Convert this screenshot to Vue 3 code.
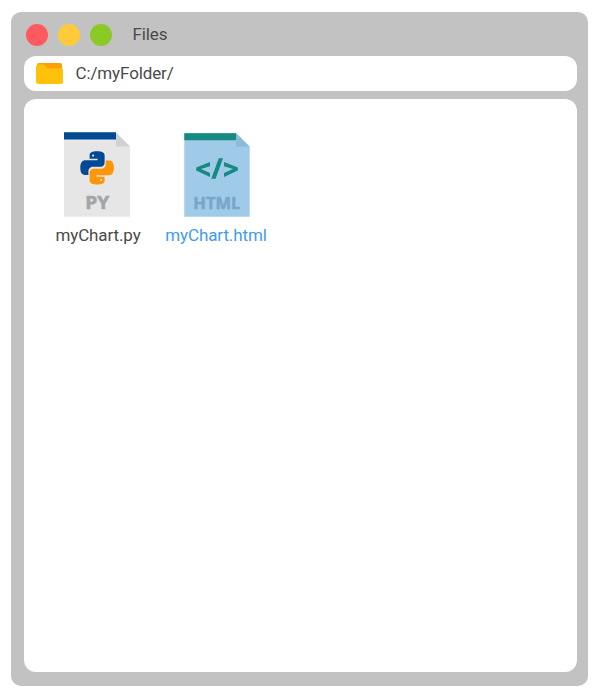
<script setup>
const path = 'C:/myFolder/'
const files = [
  { name: 'myChart.py', kind: 'py' },
  { name: 'myChart.html', kind: 'html' },
]
const snake =
  'M17 0.4C12 0.4 9.5 1.8 9.5 4.4V8H17.5V9.5H5.5C2 9.5 0.2 12 0.2 17C0.2 22 2 24.2 5 24.2H8.3V20.5C8.3 18 10.5 16 13 16H20.5C23 16 24.5 14.3 24.5 12V4.4C24.5 1.8 21.5 0.4 17 0.4ZM13 3.7a1.1 1.1 0 1 1 0 2.2a1.1 1.1 0 0 1 0-2.2Z'
</script>

<template>
  <main class="desktop">
    <section class="window">
      <header class="titlebar">
        <span class="dot red"></span>
        <span class="dot yellow"></span>
        <span class="dot green"></span>
        <span class="title">Files</span>
      </header>
      <div class="address">
        <svg class="folder" width="27" height="21" viewBox="0 0 27 21">
          <path d="M3 0H24Q26 0 26 2V10H1V2Q1 0 3 0Z" fill="#ff9f06" />
          <path d="M2.5 1.5H7.5Q8.8 1.5 9.6 3L10.4 4.3Q11 5.2 12 5.2H25Q27 5.2 27 7V19Q27 21 25 21H2.5Q0 21 0 19V4Q0 1.5 2.5 1.5Z" fill="#ffc10a" />
        </svg>
        <span class="path">{{ path }}</span>
      </div>
      <div class="content">
        <div v-for="f in files" :key="f.name" class="file" :class="f.kind">
          <svg v-if="f.kind === 'py'" width="66" height="85" viewBox="0 0 66 85">
            <path d="M0 0.5H52L66 14.5V84.7H0Z" fill="#e6e6e6" />
            <path d="M52 0.5L66 14.5H52Z" fill="#d0d1d3" />
            <path d="M0 0.3H52V7.4H0Z" fill="#024a94" />
            <g transform="translate(16.1 18.8)" fill-rule="evenodd">
              <path :d="snake" fill="#024a94" />
              <path :d="snake" fill="#ff9608" transform="rotate(180 17 17)" />
            </g>
            <text class="type" x="33.2" y="76.8" font-size="18.5" textLength="24" lengthAdjust="spacingAndGlyphs" fill="#a2a6a9" stroke="#a2a6a9">PY</text>
          </svg>
          <svg v-else width="66" height="85" viewBox="0 0 66 85">
            <path d="M0.3 1H52L65.7 14.8V84.7H0.3Z" fill="#9fcbe9" />
            <path d="M52 1L65.7 14.8H52Z" fill="#8cbbd9" />
            <path d="M0.3 1.2H52V8.2H0.3Z" fill="#158a80" />
            <path d="M26 30.1V34.2L17 37L26 40.9V45L12.2 38.5V35.4ZM40 30.1V34.2L49 37L40 40.9V45L53.8 38.5V35.4ZM34.7 26.2H39L31.6 46.8H27.3Z" fill="#158a80" />
            <text class="type" x="32.8" y="76.8" font-size="16.5" textLength="47" lengthAdjust="spacingAndGlyphs" fill="#78a7c8" stroke="#78a7c8">HTML</text>
          </svg>
          <span class="name">{{ f.name }}</span>
        </div>
      </div>
    </section>
  </main>
</template>

<style>
body {
  background: #fff;
}
</style>

<style scoped>
.desktop {
  box-sizing: border-box;
  width: 600px;
  height: 700px;
  padding: 12px 12px 14px 11px;
  font-family: Roboto, sans-serif;
  font-size: 17px;
  letter-spacing: -0.12px;
  color: #4a4a4a;
}
.window {
  box-sizing: border-box;
  display: flex;
  flex-direction: column;
  height: 674px;
  padding: 0 11px 14px 13px;
  border-radius: 10px;
  background: #c2c2c2;
}
.titlebar {
  display: flex;
  align-items: center;
  gap: 10px;
  height: 44px;
  padding: 1px 2px 0;
  box-sizing: border-box;
}
.dot {
  width: 22px;
  height: 22px;
  border-radius: 50%;
}
.red { background: #ff5a5f; }
.yellow { background: #ffcb3c; }
.green { background: #8bc926; }
.title {
  margin: 0 0 2px 10.5px;
  line-height: 20px;
}
.address {
  box-sizing: border-box;
  display: flex;
  align-items: center;
  gap: 12.5px;
  height: 35px;
  padding-left: 12px;
  border-radius: 12px;
  background: #fff;
}
.path {
  margin-bottom: 1px;
  line-height: 20px;
}
.content {
  box-sizing: border-box;
  display: flex;
  align-items: flex-start;
  flex: 1;
  gap: 10px;
  margin-top: 8px;
  padding: 33px 18px;
  border-radius: 12px;
  background: #fff;
}
.file {
  display: flex;
  flex-direction: column;
  align-items: center;
  width: 110px;
}
.name {
  margin-top: 8px;
  margin-left: 2px;
  line-height: 20px;
  white-space: nowrap;
}
.html .name {
  margin-left: 0;
  margin-right: 2px;
  color: #3f9bee;
}
.type {
  font-family: "Open Sans", sans-serif;
  font-weight: 700;
  letter-spacing: 0;
  stroke-width: 0.6px;
  text-anchor: middle;
}
</style>
